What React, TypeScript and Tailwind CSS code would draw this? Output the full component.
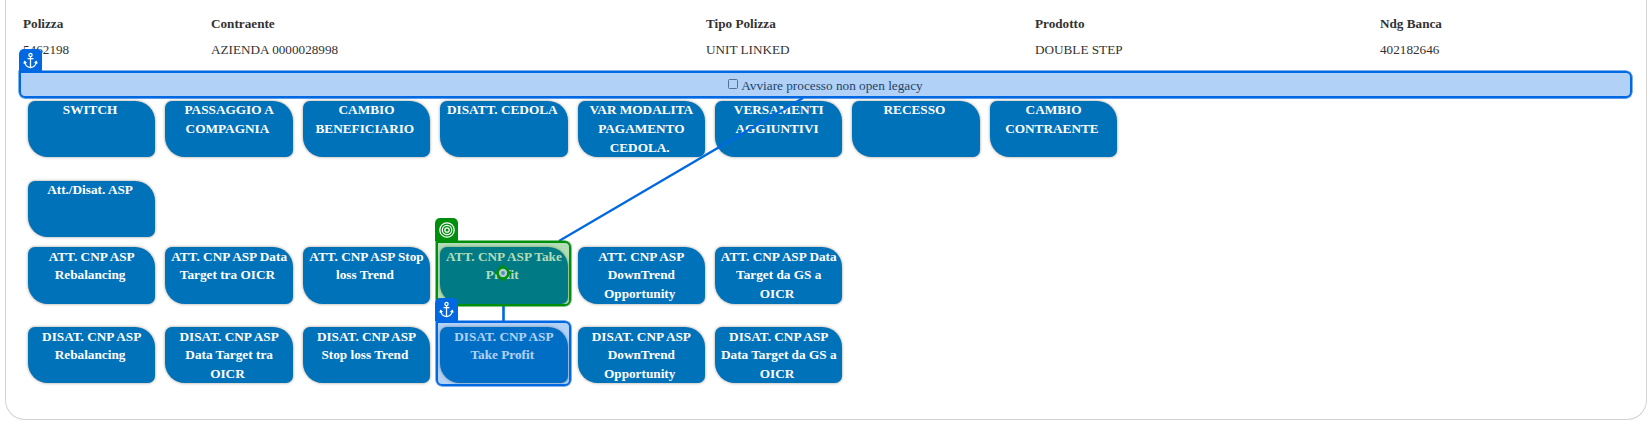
import React from "react";

type Field = { label: string; value: string };

const fields: Field[] = [
  { label: "Polizza", value: "5462198" },
  { label: "Contraente", value: "AZIENDA 0000028998" },
  { label: "Tipo Polizza", value: "UNIT LINKED" },
  { label: "Prodotto", value: "DOUBLE STEP" },
  { label: "Ndg Banca", value: "402182646" },
];

const operations: string[][] = [
  ["SWITCH"],
  ["PASSAGGIO A", "COMPAGNIA"],
  ["CAMBIO", "BENEFICIARIO"],
  ["DISATT. CEDOLA"],
  ["VAR MODALITA", "PAGAMENTO", "CEDOLA."],
  ["VERSAMENTI", "AGGIUNTIVI"],
  ["RECESSO"],
  ["CAMBIO", "CONTRAENTE"],
];

const asp: string[][] = [["Att./Disat. ASP"]];

const activations: string[][] = [
  ["ATT. CNP ASP", "Rebalancing"],
  ["ATT. CNP ASP Data", "Target tra OICR"],
  ["ATT. CNP ASP Stop", "loss Trend"],
  ["ATT. CNP ASP Take", "Profit"],
  ["ATT. CNP ASP", "DownTrend", "Opportunity"],
  ["ATT. CNP ASP Data", "Target da GS a", "OICR"],
];

const deactivations: string[][] = [
  ["DISAT. CNP ASP", "Rebalancing"],
  ["DISAT. CNP ASP", "Data Target tra", "OICR"],
  ["DISAT. CNP ASP", "Stop loss Trend"],
  ["DISAT. CNP ASP", "Take Profit"],
  ["DISAT. CNP ASP", "DownTrend", "Opportunity"],
  ["DISAT. CNP ASP", "Data Target da GS a", "OICR"],
];

function Tile({ lines, className = "h-14 leading-[18.8px]" }: { lines: string[]; className?: string }) {
  return (
    <button
      type="button"
      className={`flex w-[127.42px] shrink-0 flex-col items-center justify-start whitespace-nowrap rounded-[7px_20px_7px_20px] bg-[#0072b9] text-[13.25px] font-bold text-white shadow-[0_0_3px_rgba(90,80,60,0.6)] ${className}`}
    >
      {lines.map((line, i) => (
        <span key={i}>{i === lines.length - 1 ? line + "\u00a0" : line}</span>
      ))}
    </button>
  );
}

function TileRow({ items, tileClass, className = "" }: { items: string[][]; tileClass?: string; className?: string }) {
  return (
    <div className={`flex gap-[10px] ${className}`}>
      {items.map((lines, i) => (
        <Tile key={i} lines={lines} className={tileClass} />
      ))}
    </div>
  );
}

function AnchorIcon() {
  return (
    <svg width="15" height="17" viewBox="0 0 15 17" fill="none" stroke="white" strokeWidth="1.3">
      <circle cx="7.500" cy="3" r="1.600" />
      <path d="M7.500 4.600v11M4.500 6.700h6M1.700 10c.4 3.200 2.400 5.200 5.800 5.600 3.400-.4 5.400-2.400 5.800-5.600M.8 11.600l.9-2 1.700 1.500M14.200 11.600l-.9-2-1.700 1.500" />
    </svg>
  );
}

function TargetIcon() {
  return (
    <svg width="16" height="16" viewBox="0 0 16 16" fill="none" stroke="white" strokeWidth="1.250">
      <circle cx="8" cy="8" r="7.200" />
      <circle cx="8" cy="8" r="4.700" />
      <circle cx="8" cy="8" r="2.200" />
    </svg>
  );
}

export default function App() {
  return (
    <main className="relative h-[439px] w-[1652px] overflow-hidden bg-white font-['Liberation_Serif',serif] text-[13.2px] text-[#333]">
      <section className="ml-[5px] h-[420px] w-[1642px] rounded-b-[20px] border border-t-0 border-[#d3d3cf]">
        <dl className="ml-[17px] grid h-[71px] grid-cols-[188px_495px_329px_345px_1fr] pt-[14px]">
          {fields.map((f) => (
            <div key={f.label}>
              <dt className="h-[26px] leading-[19px] font-bold">{f.label}</dt>
              <dd className="leading-[19px]">{f.value}</dd>
            </div>
          ))}
        </dl>
        <label className="ml-[13px] flex h-[28px] w-[1613px] items-center justify-center gap-[3px]">
          <span className="mb-[2px] size-[10px] rounded-[1.5px] border border-[#767676] bg-white" />
          <span className="text-[13.25px] leading-[19px]">Avviare processo non open legacy</span>
        </label>
        <div className="ml-[22px] pt-[2px]">
          <TileRow items={operations} />
          <TileRow items={asp} className="mt-6" />
          <TileRow items={activations} tileClass="h-[57px] pt-px leading-[18.4px]" className="mt-[10px]" />
          <TileRow items={deactivations} tileClass="h-14 pt-px leading-[18.4px]" className="mt-[23px]" />
        </div>
      </section>

      <svg className="pointer-events-none absolute inset-0" width="1652" height="439" fill="none" stroke="#0068e0">
        <path d="M803 98 559 241" strokeWidth="2.200" />
        <path d="M503.500 305v17" strokeWidth="2.600" />
      </svg>

      <div className="absolute top-[71px] left-[19px] h-[27px] w-[1613px] rounded-[6px] rounded-tl-none border-2 border-[#0068e0] bg-[#0068e0]/30 shadow-[0_0_0_0.5px_#0068e0,0_1px_0_rgba(0,104,224,0.3)]" />
      <div className="absolute top-[49px] left-[19px] flex h-[22px] w-[23px] items-center justify-center rounded-t-[5px] bg-[#0068e0]">
        <AnchorIcon />
      </div>

      <div className="absolute top-[241px] left-[436px] h-[65px] w-[135px] rounded-[6px] rounded-tl-none border-2 border-[#008f0d] bg-[#008f0d]/30 shadow-[0_0_0_0.5px_#008f0d]" />
      <div className="absolute top-[218px] left-[435px] flex h-[23px] w-[23px] items-center justify-center rounded-t-[5px] bg-[#008f0d]">
        <TargetIcon />
      </div>
      <svg className="absolute top-[264px] left-[494px]" width="18" height="18" viewBox="0 0 18 18" fill="none">
        <circle cx="9" cy="9" r="5.400" fill="#b5cdd0" stroke="#008f0d" strokeWidth="2.500" />
        <path d="M9 .8v3M9 14.200v3M.8 9h3M14.200 9h3" stroke="#008f0d" strokeWidth="2.400" />
        <circle cx="9" cy="9" r="1.900" fill="#4e93b5" />
      </svg>

      <div className="absolute top-[321px] left-[436px] h-[65px] w-[135px] rounded-[6px] rounded-tl-none border-2 border-[#0068e0] bg-[#0068e0]/30 shadow-[0_0_0_0.5px_#0068e0]" />
      <div className="absolute top-[298px] left-[435px] flex h-[23px] w-[23px] items-center justify-center rounded-t-[5px] bg-[#0068e0]">
        <AnchorIcon />
      </div>
    </main>
  );
}
